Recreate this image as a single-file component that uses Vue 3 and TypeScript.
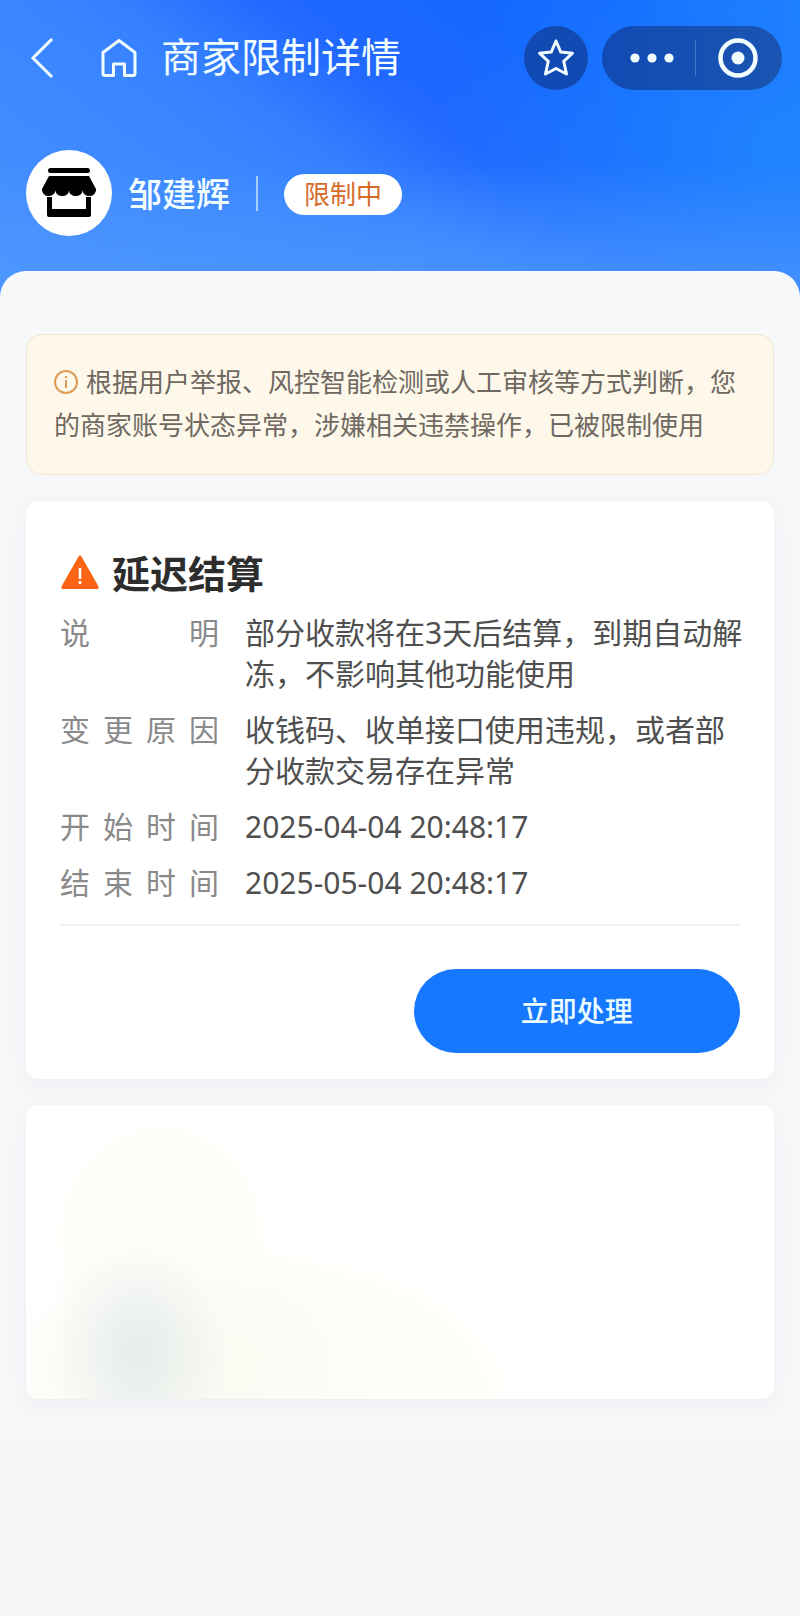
<script setup lang="ts">
interface Detail {
  label: string
  value: string
}

const title = '商家限制详情'
const merchant = '邹建辉'
const status = '限制中'
const notice =
  '根据用户举报、风控智能检测或人工审核等方式判断，您的商家账号状态异常，涉嫌相关违禁操作，已被限制使用'

const details: Detail[] = [
  { label: '说明', value: '部分收款将在3天后结算，到期自动解冻，不影响其他功能使用' },
  { label: '变更原因', value: '收钱码、收单接口使用违规，或者部分收款交易存在异常' },
  { label: '开始时间', value: '2025-04-04 20:48:17' },
  { label: '结束时间', value: '2025-05-04 20:48:17' },
]
</script>

<template>
  <div class="page">
    <header class="hero">
      <nav class="nav">
        <button class="icon-btn back" type="button" aria-label="返回">
          <svg width="24" height="42" viewBox="0 0 24 42" fill="none" stroke="currentColor" stroke-width="3">
            <path d="M22 2L3 21l19 19" />
          </svg>
        </button>
        <button class="icon-btn home" type="button" aria-label="首页">
          <svg width="38" height="40" viewBox="0 0 38 40" fill="none" stroke="currentColor" stroke-width="3" stroke-linejoin="round">
            <path d="M3 14.500L19 2.500l16 12V35.500a2 2 0 0 1-2 2h-8.500V26h-11v11.500H5a2 2 0 0 1-2-2z" />
          </svg>
        </button>
        <h1 class="title">{{ title }}</h1>
        <button class="star" type="button" aria-label="收藏">
          <svg width="38" height="40" viewBox="0 0 38 40" fill="none" stroke="currentColor" stroke-width="3" stroke-linejoin="round">
            <path d="M19 3l4.700 11 11.800 1.200-8.800 8.100 2.800 12.700L19 30.500 8.500 36l2.800-12.700-8.800-8.100L14.300 14z" />
          </svg>
        </button>
        <div class="capsule">
          <button class="capsule-btn more" type="button" aria-label="更多">
            <svg width="44" height="10" viewBox="0 0 44 10" fill="currentColor">
              <circle cx="5" cy="5" r="4.600" />
              <circle cx="22" cy="5" r="4.600" />
              <circle cx="39" cy="5" r="4.600" />
            </svg>
          </button>
          <span class="capsule-line"></span>
          <button class="capsule-btn close" type="button" aria-label="关闭">
            <svg width="40" height="40" viewBox="0 0 40 40">
              <circle cx="20" cy="20" r="17.500" fill="none" stroke="currentColor" stroke-width="4.500" />
              <circle cx="20" cy="20" r="6.500" fill="currentColor" />
            </svg>
          </button>
        </div>
      </nav>

      <div class="merchant">
        <span class="avatar">
          <svg width="54" height="50" viewBox="0 0 54 50" fill="#000">
            <rect x="6" y="0" width="42" height="5" rx="2.500" />
            <path d="M7 8H47L54 21A6.750 6.300 0 0 1 40.500 22.500A6.750 5.500 0 0 1 27 22.500A6.750 5.500 0 0 1 13.500 22.500A6.750 6.300 0 0 1 0 21Z" />
            <path d="M5 29h5v12h34V29h5v18a2 2 0 0 1-2 2H7a2 2 0 0 1-2-2z" />
          </svg>
        </span>
        <span class="name">{{ merchant }}</span>
        <span class="bar"></span>
        <span class="tag">{{ status }}</span>
      </div>
    </header>

    <main class="sheet">
      <p class="notice">
        <svg class="info" width="24" height="24" viewBox="0 0 24 24" fill="none" stroke="currentColor" stroke-width="2">
          <circle cx="12" cy="12" r="11" />
          <path d="M12 10v8M12 6v2" />
        </svg>{{ notice }}
      </p>

      <section class="card">
        <h2 class="card-title">
          <svg width="40" height="36" viewBox="0 0 40 36">
            <path d="M18.500 2.500a1.700 1.700 0 0 1 3 0l17 30a1.700 1.700 0 0 1-1.500 2.500H3a1.700 1.700 0 0 1-1.500-2.500z" fill="#fa6414" />
            <path d="M20 14v11M20 27v3" stroke="#fff" stroke-width="2.500" />
          </svg>
          <span>延迟结算</span>
        </h2>
        <dl class="details">
          <div v-for="item in details" :key="item.label" class="row">
            <dt>{{ item.label }}</dt>
            <dd>{{ item.value }}</dd>
          </div>
        </dl>
        <div class="actions">
          <button class="primary" type="button">立即处理</button>
        </div>
      </section>

      <section class="card haze"></section>
    </main>
  </div>
</template>

<style>
body {
  margin: 0;
  background: #f6f6f6;
}
</style>

<style scoped>
.page {
  min-height: 100vh;
  background: #f6f6f6;
  font-family: "Noto Sans CJK SC", "Noto Sans", sans-serif;
  color: #4f4f4f;
}

button {
  margin: 0;
  padding: 0;
  border: 0;
  background: none;
  color: inherit;
  font: inherit;
  cursor: pointer;
}

svg {
  display: block;
  flex: none;
}

.hero {
  padding: 26px 18px 61px 26px;
  color: #f2fdff;
  background:
    linear-gradient(180deg, rgba(78, 152, 255, 0) 55%, rgba(78, 152, 255, 0.7) 92%),
    radial-gradient(ellipse 45% 90% at 100% 50%, rgba(34, 136, 255, 0.9), rgba(34, 136, 255, 0)),
    linear-gradient(36deg, #4a92ff 0%, #3a86ff 34%, #3580ff 43%, #2168ff 56%, #1567ff 72%, #136aff 86%, #1a7aff 100%);
}

.nav {
  display: flex;
  align-items: center;
  height: 64px;
}

.icon-btn {
  display: flex;
  align-items: center;
  height: 64px;
}

.back {
  margin-left: 4px;
}

.home {
  margin-left: 46px;
}

.title {
  flex: 1;
  margin: 0 0 0 23px;
  padding-bottom: 6px;
  font-size: 40px;
  line-height: 58px;
  font-weight: 400;
  white-space: nowrap;
}

.star {
  display: flex;
  align-items: center;
  justify-content: center;
  width: 64px;
  height: 64px;
  border-radius: 50%;
  background: #124ab4;
}

.capsule {
  display: flex;
  align-items: center;
  width: 180px;
  height: 64px;
  margin-left: 14px;
  border-radius: 32px;
  background: linear-gradient(90deg, #124ab4, #1b55b2);
}

.capsule-btn {
  display: flex;
  flex: 1;
  align-items: center;
  justify-content: center;
  height: 64px;
}

.more {
  padding-left: 8px;
}

.close {
  padding-right: 2px;
}

.capsule-line {
  width: 1px;
  height: 36px;
  background: #4675c6;
}

.merchant {
  display: flex;
  align-items: center;
  margin-top: 60px;
}

.avatar {
  display: flex;
  align-items: center;
  justify-content: center;
  width: 86px;
  height: 86px;
  border-radius: 50%;
  background: #fff;
}

.name {
  margin-left: 16px;
  font-size: 34px;
  line-height: 50px;
  font-weight: 500;
}

.bar {
  width: 2px;
  height: 35px;
  margin: 0 26px;
  background: #a3ccff;
}

.tag {
  margin-top: 2px;
  padding: 0 20px 3px;
  border-radius: 21px;
  background: #fff;
  color: #d66c2c;
  font-size: 26px;
  line-height: 38px;
}

.sheet {
  display: flex;
  flex-direction: column;
  gap: 26px;
  margin-top: -26px;
  padding: 63px 26px 36px;
  border-radius: 26px 26px 0 0;
  background: #f6f8fa;
}

.notice {
  margin: 0;
  padding: 24px 26px 29px 27px;
  border: 1px solid #f1e5cd;
  border-radius: 16px;
  background: #fef8eb;
  color: #6f6961;
  font-size: 26px;
  line-height: 43px;
}

.info {
  display: inline-block;
  margin-right: 8px;
  color: #dc9c54;
  vertical-align: -2px;
}

.card {
  border-radius: 12px;
  background: #fff;
  box-shadow: 0 6px 24px rgba(60, 70, 80, 0.06);
}

.card-title {
  display: flex;
  align-items: center;
  gap: 12px;
  margin: 0;
  padding: 44px 34px 0;
  color: #2d2d2d;
  font-size: 38px;
  line-height: 54px;
  font-weight: 700;
}

.details {
  display: flex;
  flex-direction: column;
  gap: 15px;
  margin: 0;
  padding: 13px 30px 21px 34px;
  font-family: "Noto Sans", "Noto Sans CJK SC", sans-serif;
  font-size: 30px;
  line-height: 41px;
}

.row {
  display: flex;
  gap: 26px;
}

dt {
  flex: none;
  width: 159px;
  color: #8a8a8a;
  text-align: justify;
  text-align-last: justify;
  text-justify: inter-character;
}

dd {
  flex: 1;
  margin: 0;
}

.actions {
  display: flex;
  justify-content: flex-end;
  margin: 0 34px;
  padding: 43px 0 26px;
  border-top: 2px solid #f2f2f2;
}

.primary {
  width: 48%;
  padding-bottom: 2px;
  border-radius: 42px;
  background: #1678ff;
  color: #eafcff;
  font-size: 28px;
  line-height: 82px;
  font-weight: 500;
}

.haze {
  height: 294px;
  background:
    radial-gradient(ellipse 90px 110px at 15% 84%, rgba(222, 231, 231, 0.75), rgba(222, 231, 231, 0) 100%),
    radial-gradient(ellipse 200px 130px at 22% 88%, rgba(249, 249, 240, 0.9), rgba(250, 250, 244, 0) 100%),
    radial-gradient(ellipse 120px 130px at 18% 45%, rgba(254, 254, 251, 1) 80%, rgba(254, 254, 251, 0) 100%),
    radial-gradient(ellipse 270px 160px at 32% 100%, rgba(254, 254, 250, 1) 80%, rgba(254, 254, 250, 0) 100%),
    #fff;
}
</style>
